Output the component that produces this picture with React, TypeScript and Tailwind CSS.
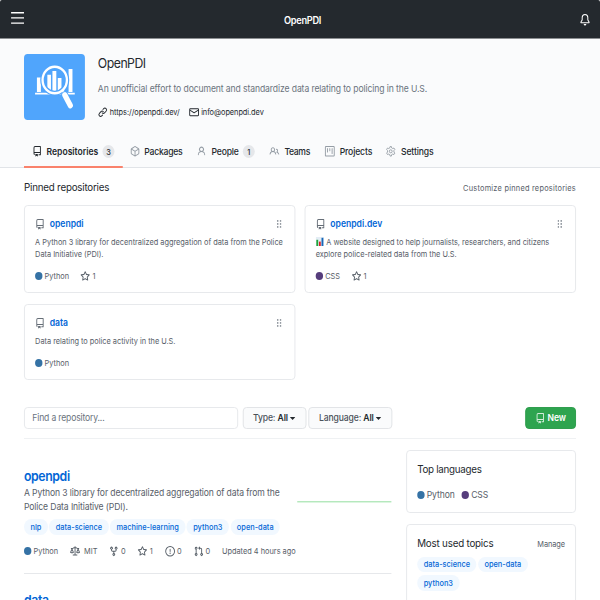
import React from "react";

const icons = {
  repo: "M2 2.5A2.5 2.5 0 014.5 0h8.75a.75.75 0 01.75.75v12.5a.75.75 0 01-.75.75h-2.5a.75.75 0 110-1.5h1.75v-2h-8a1 1 0 00-.714 1.7.75.75 0 01-1.072 1.05A2.495 2.495 0 012 11.5v-9zm10.5-1V9h-8c-.356 0-.694.074-1 .208V2.5a1 1 0 011-1h8zM5 12.25v3.25a.25.25 0 00.4.2l1.45-1.087a.25.25 0 01.3 0L8.6 15.7a.25.25 0 00.4-.2v-3.25a.25.25 0 00-.25-.25h-3.5a.25.25 0 00-.25.25z",
  package:
    "M8.878.392a1.75 1.75 0 00-1.756 0l-5.25 3.045A1.75 1.75 0 001 4.951v6.098c0 .624.332 1.2.872 1.514l5.25 3.045a1.75 1.75 0 001.756 0l5.25-3.045c.54-.313.872-.89.872-1.514V4.951c0-.624-.332-1.2-.872-1.514L8.878.392zM7.875 1.69a.25.25 0 01.25 0l4.63 2.685L8 7.133 3.245 4.375l4.63-2.685zM2.5 5.677v5.372c0 .09.047.171.125.216l4.625 2.683V8.432L2.5 5.677zm6.25 8.271l4.625-2.683a.25.25 0 00.125-.216V5.677L8.75 8.432v5.516z",
  person:
    "M10.5 5a2.5 2.5 0 11-5 0 2.5 2.5 0 015 0zm.061 3.073a4 4 0 10-5.123 0 6.004 6.004 0 00-3.431 5.142.75.75 0 001.498.07 4.5 4.5 0 018.99 0 .75.75 0 101.498-.07 6.005 6.005 0 00-3.432-5.142z",
  people:
    "M5.5 3.5a2 2 0 100 4 2 2 0 000-4zM2 5.5a3.5 3.5 0 115.898 2.549 5.507 5.507 0 013.034 4.084.75.75 0 11-1.482.235 4.001 4.001 0 00-7.9 0 .75.75 0 01-1.482-.236A5.507 5.507 0 013.102 8.05 3.49 3.49 0 012 5.5zM11 4a.75.75 0 100 1.5 1.5 1.5 0 01.666 2.844.75.75 0 00-.416.672v.352a.75.75 0 00.574.73c1.2.289 2.162 1.2 2.522 2.372a.75.75 0 101.434-.44 5.01 5.01 0 00-2.56-3.012A3 3 0 0011 4z",
  project:
    "M1.75 0A1.75 1.75 0 000 1.75v12.5C0 15.216.784 16 1.75 16h12.5A1.75 1.75 0 0016 14.25V1.75A1.75 1.75 0 0014.25 0H1.75zM1.5 1.75a.25.25 0 01.25-.25h12.5a.25.25 0 01.25.25v12.5a.25.25 0 01-.25.25H1.75a.25.25 0 01-.25-.25V1.75zM11.75 3a.75.75 0 00-.75.75v7.5a.75.75 0 001.5 0v-7.5a.75.75 0 00-.75-.75zm-8.25.75a.75.75 0 011.5 0v5.5a.75.75 0 01-1.5 0v-5.5zM8 3a.75.75 0 00-.75.75v3.5a.75.75 0 001.5 0v-3.5A.75.75 0 008 3z",
  star: "M8 .25a.75.75 0 01.673.418l1.882 3.815 4.21.612a.75.75 0 01.416 1.279l-3.046 2.97.719 4.192a.75.75 0 01-1.088.791L8 12.347l-3.766 1.98a.75.75 0 01-1.088-.79l.72-4.194L.818 6.374a.75.75 0 01.416-1.28l4.21-.611L7.327.668A.75.75 0 018 .25zm0 2.445L6.615 5.5a.75.75 0 01-.564.41l-3.097.45 2.24 2.184a.75.75 0 01.216.664l-.528 3.084 2.769-1.456a.75.75 0 01.698 0l2.77 1.456-.53-3.084a.75.75 0 01.216-.664l2.24-2.183-3.096-.45a.75.75 0 01-.564-.41L8 2.694v.001z",
  law: "M8.75.75a.75.75 0 00-1.5 0V2h-.984c-.305 0-.604.08-.869.23l-1.288.737A.25.25 0 013.984 3H1.75a.75.75 0 000 1.5h.428L.066 9.192a.75.75 0 00.154.838l.53-.53-.53.53v.001l.002.002.002.002.006.006.016.015.045.04a3.514 3.514 0 00.686.45A4.492 4.492 0 003 11c.88 0 1.556-.22 2.023-.454a3.515 3.515 0 00.686-.45l.045-.04.016-.015.006-.006.002-.002.001-.002L5.25 9.5l.53.53a.75.75 0 00.154-.838L3.822 4.5h.162c.305 0 .604-.08.869-.23l1.289-.737a.25.25 0 01.124-.033h.984V13h-2.5a.75.75 0 000 1.5h6.5a.75.75 0 000-1.5h-2.5V3.5h.984a.25.25 0 01.124.033l1.29.736c.264.152.563.231.868.231h.162l-2.112 4.692a.75.75 0 00.154.838l.53-.53-.53.53v.001l.002.002.002.002.006.006.016.015.045.04a3.517 3.517 0 00.686.45A4.492 4.492 0 0013 11c.88 0 1.556-.22 2.023-.454a3.512 3.512 0 00.686-.45l.045-.04.01-.01.006-.005.006-.006.002-.002.001-.002-.529-.531.53.53a.75.75 0 00.154-.838L13.823 4.5h.427a.75.75 0 000-1.5h-2.234a.25.25 0 01-.124-.033l-1.29-.736A1.75 1.75 0 009.735 2H8.75V.75zM1.695 9.227c.285.135.718.273 1.305.273s1.02-.138 1.305-.273L3 6.327l-1.305 2.9zm10 0c.285.135.718.273 1.305.273s1.02-.138 1.305-.273L13 6.327l-1.305 2.9z",
  fork: "M5 3.25a.75.75 0 11-1.5 0 .75.75 0 011.5 0zm0 2.122a2.25 2.25 0 10-1.5 0v.878A2.25 2.25 0 005.75 8.5h1.5v2.128a2.251 2.251 0 101.5 0V8.5h1.5a2.25 2.25 0 002.25-2.25v-.878a2.25 2.25 0 10-1.5 0v.878a.75.75 0 01-.75.75h-4.5A.75.75 0 015 6.25v-.878zm3.75 7.378a.75.75 0 11-1.5 0 .75.75 0 011.5 0zm3-8.75a.75.75 0 100-1.5.75.75 0 000 1.5z",
  issue:
    "M8 1.5a6.5 6.5 0 100 13 6.5 6.5 0 000-13zM0 8a8 8 0 1116 0A8 8 0 010 8zm9 3a1 1 0 11-2 0 1 1 0 012 0zm-.25-6.25a.75.75 0 00-1.5 0v3.5a.75.75 0 001.5 0v-3.5z",
  pull: "M7.177 3.073L9.573.677A.25.25 0 0110 .854v4.792a.25.25 0 01-.427.177L7.177 3.427a.25.25 0 010-.354zM3.75 2.5a.75.75 0 100 1.5.75.75 0 000-1.5zm-2.25.75a2.25 2.25 0 113 2.122v5.256a2.251 2.251 0 11-1.5 0V5.372A2.25 2.25 0 011.5 3.25zM11 2.5h-1V4h1a1 1 0 011 1v5.628a2.251 2.251 0 101.5 0V5A2.5 2.5 0 0011 2.5zm1 10.25a.75.75 0 111.5 0 .75.75 0 01-1.5 0zM3.75 12a.75.75 0 100 1.5.75.75 0 000-1.5z",
  link: "M7.775 3.275a.75.75 0 001.06 1.06l1.25-1.25a2 2 0 112.83 2.83l-2.5 2.5a2 2 0 01-2.83 0 .75.75 0 00-1.06 1.06 3.5 3.5 0 004.95 0l2.5-2.5a3.5 3.5 0 00-4.95-4.95l-1.25 1.25zm-4.69 9.64a2 2 0 010-2.83l2.5-2.5a2 2 0 012.83 0 .75.75 0 001.06-1.06 3.5 3.5 0 00-4.95 0l-2.5 2.5a3.5 3.5 0 004.95 4.95l1.25-1.25a.75.75 0 00-1.06-1.06l-1.25 1.25a2 2 0 01-2.83 0z",
  mail: "M1.75 2A1.75 1.75 0 000 3.75v.736a.75.75 0 000 .027v7.737C0 13.216.784 14 1.75 14h12.5A1.75 1.75 0 0016 12.25v-8.5A1.75 1.75 0 0014.25 2H1.75zM14.5 4.07v-.32a.25.25 0 00-.25-.25H1.75a.25.25 0 00-.25.25v.32L8 7.88l6.5-3.81zm-13 1.74v6.441c0 .138.112.25.25.25h12.5a.25.25 0 00.25-.25V5.809L8.38 9.397a.75.75 0 01-.76 0L1.5 5.809z",
  bell: "M8 16a2 2 0 001.985-1.75c.017-.137-.097-.25-.235-.25h-3.5c-.138 0-.252.113-.235.25A2 2 0 008 16z M8 1.5A3.5 3.5 0 004.5 5v2.947c0 .346-.102.683-.294.97l-1.703 2.556a.018.018 0 00-.003.01l.001.006c0 .002.002.004.004.006a.017.017 0 00.006.004l.007.001h10.964l.007-.001a.016.016 0 00.006-.004.016.016 0 00.004-.006l.001-.007a.017.017 0 00-.003-.01l-1.703-2.554a1.75 1.75 0 01-.294-.97V5A3.5 3.5 0 008 1.5zM3 5a5 5 0 0110 0v2.947c0 .05.015.098.042.139l1.703 2.555A1.518 1.518 0 0113.482 13H2.518a1.518 1.518 0 01-1.263-2.36l1.703-2.554A.25.25 0 003 7.947V5z",
};

type IconName = keyof typeof icons | "gear";

function Icon({ name, className = "size-[10.6px]" }: { name: IconName; className?: string }) {
  return (
    <svg viewBox="0 0 16 16" fill="currentColor" className={`shrink-0 overflow-visible ${className}`}>
      {name === "gear" ? (
        <g fill="none" stroke="currentColor" strokeWidth="1.4">
          <path d="M7 .8h2l.6 2.200 1.600.800 2.100-.700 1.400 2.200-1.500 1.600v2.200l1.500 1.600-1.400 2.200-2.100-.700-1.600.800-.6 2.200H7l-.6-2.200-1.600-.800-2.100.700-1.400-2.200 1.500-1.600V6.900L1.300 5.300l1.400-2.200 2.100.700 1.600-.800z" strokeLinejoin="round" />
          <circle cx="8" cy="8" r="2.300" />
        </g>
      ) : (
        <path fillRule="evenodd" d={icons[name]} />
      )}
    </svg>
  );
}

function Avatar() {
  return (
    <svg viewBox="0 0 66 66" className="size-[66px] shrink-0">
      <rect width="66" height="66" rx="4" fill="#50a5fc" />
      <path
        d="M12 38.700h43v1.800H12zM14 23.500h4.300V38H14zM25.300 20.700h3.900v16h-3.900zM30.800 17h4.200v21h-4.200zM36.600 24h4v13h-4zM48.300 15h4.200v23h-4.200z"
        fill="#fff"
      />
      <circle cx="33.300" cy="26" r="13.200" fill="none" stroke="#50a5fc" strokeWidth="5" />
      <circle cx="33.300" cy="26" r="13.200" fill="none" stroke="#fff" strokeWidth="2.500" />
      <path d="M41.500 36.500l2.500 3" stroke="#fff" strokeWidth="2.800" />
      <path d="M44.200 41l5.800 10.500" stroke="#50a5fc" strokeWidth="7.600" strokeLinecap="round" />
      <path d="M44.200 41l6 10.500" stroke="#fff" strokeWidth="5.600" strokeLinecap="round" />
    </svg>
  );
}

function Dot({ color }: { color: string }) {
  return <span className={`size-[8px] shrink-0 rounded-full ${color}`} />;
}

function Tab({
  icon,
  label,
  count,
  active,
  width,
  text,
}: {
  icon: IconName;
  label: string;
  count?: string;
  active?: boolean;
  width: string;
  text: string;
}) {
  return (
    <div
      className={`flex h-[32px] items-center border-b-2 pt-px text-[9.3px] text-[#24292e] ${width} ${
        active ? "border-[#f9826c] pl-[9px] font-semibold" : "border-transparent pl-[8px] font-medium"
      }`}
    >
      <Icon name={icon} className={active ? "size-[10.6px] text-[#24292e]" : "size-[10.6px] text-[#959da5]"} />
      <span className={`whitespace-nowrap ${active ? "ml-[4.8px]" : "ml-[5.3px]"} ${text}`}>{label}</span>
      {count && (
        <span className="ml-[4.5px] flex h-[13px] w-[13px] items-center justify-center rounded-full bg-[#e5e7ea] text-[8px] font-medium">
          {count}
        </span>
      )}
    </div>
  );
}

function Grip() {
  return (
    <svg viewBox="0 0 5 8" className="mr-[3px] h-[8px] w-[5px] text-[#6a737d]" fill="currentColor">
      {[0.3, 3.3, 6.3].map((y) => (
        <React.Fragment key={y}>
          <rect x="0" y={y} width="1.6" height="1.3" />
          <rect x="3.2" y={y} width="1.6" height="1.3" />
        </React.Fragment>
      ))}
    </svg>
  );
}

function PinCard({
  name,
  children,
  lang,
  color,
  stars,
  height,
}: {
  name: string;
  children: React.ReactNode;
  lang: string;
  color: string;
  stars?: string;
  height: string;
}) {
  return (
    <div className={`flex flex-col rounded-[4px] border border-[#e6e8eb] px-[11px] pt-[11px] pb-[10px] ${height}`}>
      <div className="flex h-[14px] items-center">
        <Icon name="repo" className="size-[10.6px] text-[#666e77]" />
        <span className="ml-[5.3px] text-[9.3px] font-semibold text-[#0366d6]">{name}</span>
        <span className="grow" />
        <Grip />
      </div>
      <p className="mt-[4.5px] text-[8px] leading-[12px] tracking-[-0.02px] whitespace-nowrap text-[#586069]">{children}</p>
      <span className="grow" />
      <div className="flex h-[12px] items-center text-[8px] text-[#586069]">
        <Dot color={color} />
        <span className="ml-[2.3px]">{lang}</span>
        {stars && (
          <>
            <Icon name="star" className="ml-[12.2px] size-[10.6px]" />
            <span className="ml-[2.6px]">{stars}</span>
          </>
        )}
      </div>
    </div>
  );
}

function Topic({ children }: { children: React.ReactNode }) {
  return (
    <span className="flex h-[15.5px] items-center rounded-full bg-[#f1f8ff] px-[7px] text-[8px] font-medium whitespace-nowrap text-[#0366d6]">
      {children}
    </span>
  );
}

function FilterButton({ label, width, gap }: { label: string; width: string; gap: string }) {
  return (
    <div
      className={`flex h-[22px] items-center justify-center rounded-[4px] border border-[#e1e3e6] bg-[#fafbfc] text-[9.3px] font-medium tracking-[-0.14px] text-[#4b525a] ${width} ${gap}`}
    >
      {label}:&nbsp;<span className="font-semibold text-[#24292e]">All</span>
      <svg viewBox="0 0 6 3" className="ml-[2.5px] h-[3px] w-[6px]" fill="#24292e">
        <path d="M0 0h6L3 3z" />
      </svg>
    </div>
  );
}

export default function App() {
  return (
    <div className="h-[600px] w-[600px] overflow-hidden bg-white">
      <div className="flex h-[600px] w-[650px] origin-top-left scale-x-[0.92308] flex-col overflow-hidden bg-white font-['Inter',sans-serif] text-[#24292e]">
        <header className="flex h-[39px] shrink-0 items-center justify-between rounded-t-[2px] border-b border-[#8b8e91] bg-[#24292e] pr-[10.5px] pl-[11.5px] text-white">
          <svg viewBox="0 0 14 12" className="-mt-[1.5px] h-[12px] w-[14px]" fill="#fff">
            <path d="M0 0h14v1.4H0zM0 5.2h14v1.4H0zM0 10.400h14v1.400H0z" />
          </svg>
          <span className="pt-[2px] pl-[2px] text-[10px] font-semibold tracking-[-0.33px]">OpenPDI</span>
          <Icon name="bell" className="mt-[1.5px] size-[11.5px]" />
        </header>

        <section className="flex h-[129px] shrink-0 flex-col border-b border-[#e1e4e8] bg-[#fafbfc] px-[26px]">
          <div className="flex pt-[15.3px]">
            <Avatar />
            <div className="ml-[14px] flex flex-col">
              <h1 className="text-[13.3px] leading-[19px] tracking-[-0.55px]">OpenPDI</h1>
              <p className="mt-[9px] text-[9.3px] leading-[13px] tracking-[-0.1px] whitespace-nowrap text-[#6a737d]">
                An unofficial effort to document and standardize data relating to policing in the U.S.
              </p>
              <div className="mt-[10.2px] flex h-[13px] items-center text-[8px]">
                <Icon name="link" />
                <span className="ml-[2.2px] tracking-[-0.03px]">https://openpdi.dev/</span>
                <Icon name="mail" className="ml-[10.5px] size-[10.6px]" />
                <span className="ml-[2.2px] tracking-[-0.07px]">info@openpdi.dev</span>
              </div>
            </div>
          </div>
          <nav className="mt-auto -mb-px flex">
            <Tab icon="repo" label="Repositories" count="3" active width="w-[106.5px]" text="" />
            <Tab icon="package" label="Packages" width="w-[72.8px]" text="tracking-[-0.25px]" />
            <Tab icon="person" label="People" count="1" width="w-[78.9px]" text="tracking-[-0.2px]" />
            <Tab icon="people" label="Teams" width="w-[59.9px]" text="tracking-[-0.35px]" />
            <Tab icon="project" label="Projects" width="w-[66.4px]" text="tracking-[-0.13px]" />
            <Tab icon="gear" label="Settings" width="w-[70px]" text="tracking-[-0.12px]" />
          </nav>
        </section>

        <main className="flex flex-col px-[26px]">
          <div className="mt-[11.5px] flex h-[16px] items-center justify-between">
            <h2 className="text-[10.6px] tracking-[-0.23px]">Pinned repositories</h2>
            <span className="pt-px text-[8px] tracking-[0.25px] text-[#586069]">Customize pinned repositories</span>
          </div>
          <div className="mt-[9.5px] grid grid-cols-[294px_294px] items-start gap-x-[10px] gap-y-[11px]">
            <PinCard name="openpdi" lang="Python" color="bg-[#3572A5]" stars="1" height="h-[88px]">
              A Python 3 library for decentralized aggregation of data from the Police
              <br />
              Data Initiative (PDI).
            </PinCard>
            <PinCard name="openpdi.dev" lang="CSS" color="bg-[#563d7c]" stars="1" height="h-[88px]">
              <svg viewBox="0 0 9 9" className="-mt-px mr-[2.5px] inline size-[9px] align-middle">
                <rect width="9" height="9" fill="#e4edf5" />
                <rect x=".7" y="2.8" width="2" height="6.2" fill="#1fa53a" />
                <rect x="3.5" y="4.6" width="2" height="4.4" fill="#d8232a" />
                <rect x="6.3" y=".8" width="2" height="8.2" fill="#1767b8" />
              </svg>
              A website designed to help journalists, researchers, and citizens
              <br />
              explore police-related data from the U.S.
            </PinCard>
            <PinCard name="data" lang="Python" color="bg-[#3572A5]" height="h-[76px]">
              Data relating to police activity in the U.S.
            </PinCard>
          </div>

          <div className="mt-[27px] flex h-[32px] border-b border-[#eff1f3]">
            <div className="flex h-[22px] w-[232px] items-center rounded-[4px] border border-[#e6e8eb] px-[8px] text-[9.3px] tracking-[-0.17px] text-[#6a737d]">
              Find a repository...
            </div>
            <FilterButton label="Type" width="w-[68.5px]" gap="ml-[5px]" />
            <FilterButton label="Language" width="w-[91px]" gap="ml-[2.5px]" />
            <div className="ml-auto flex h-[22px] w-[55px] items-center justify-center rounded-[4px] border border-[#2d9c4b] bg-[#2ea44f] text-[9.3px] font-semibold tracking-[-0.1px] text-white">
              <Icon name="repo" className="mr-[2.5px] size-[10.6px] opacity-80" />
              New
            </div>
          </div>

          <div className="flex justify-between">
            <div className="w-[398px] pt-[28px]">
              <div className="flex h-[107px] flex-col border-b border-[#e6e8eb]">
                <h3 className="text-[13.3px] leading-[18px] font-semibold tracking-[-0.42px] text-[#0366d6]">openpdi</h3>
                <div className="mt-px flex items-center justify-between">
                  <p className="text-[9.3px] leading-[14px] tracking-[-0.115px] whitespace-nowrap text-[#586069]">
                    A Python 3 library for decentralized aggregation of data from the
                    <br />
                    Police Data Initiative (PDI).
                  </p>
                  <span className="mt-[3px] w-[102px] border-t border-b border-t-[#b5e8bd] border-b-[#dcf5e0]" />
                </div>
                <div className="mt-[5px] flex gap-[1.6px]">
                  <Topic>nlp</Topic>
                  <Topic>data-science</Topic>
                  <Topic>machine-learning</Topic>
                  <Topic>python3</Topic>
                  <Topic>open-data</Topic>
                </div>
                <div className="mt-[10px] flex h-[13px] items-center text-[8px] whitespace-nowrap text-[#586069]">
                  <Dot color="bg-[#3572A5]" />
                  <span className="ml-[2.3px] w-[39.5px]">Python</span>
                  <Icon name="law" />
                  <span className="ml-[4.7px] w-[27px]">MIT</span>
                  <Icon name="fork" />
                  <span className="ml-[2.3px] w-[18.5px]">0</span>
                  <Icon name="star" />
                  <span className="ml-[2.3px] w-[16.4px]">1</span>
                  <Icon name="issue" />
                  <span className="ml-[2.3px] w-[18.2px]">0</span>
                  <Icon name="pull" />
                  <span className="ml-[2.3px] w-[17.7px]">0</span>
                  <span>Updated 4 hours ago</span>
                </div>
              </div>
              <h3 className="mt-[17px] text-[13.3px] leading-[18px] font-semibold tracking-[-0.42px] text-[#0366d6]">data</h3>
            </div>

            <aside className="flex w-[184px] flex-col gap-[11px] pt-[11px]">
              <div className="h-[63px] rounded-[4px] border border-[#e6e8eb] px-[11px] pt-[11px]">
                <h4 className="text-[10.6px] leading-[16px] tracking-[-0.3px]">Top languages</h4>
                <div className="mt-[10px] flex h-[14px] items-center text-[9.3px] tracking-[-0.08px] text-[#586069]">
                  <Dot color="bg-[#3572A5]" />
                  <span className="ml-[2.2px]">Python</span>
                  <Dot color="ml-[7.5px] bg-[#563d7c]" />
                  <span className="ml-[2.3px]">CSS</span>
                </div>
              </div>
              <div className="h-[100px] rounded-[4px] border border-[#e6e8eb] px-[11px] pt-[10.5px]">
                <div className="flex h-[16px] items-center justify-between">
                  <h4 className="text-[10.6px] tracking-[-0.21px]">Most used topics</h4>
                  <span className="pt-px text-[8px] tracking-[-0.1px] text-[#586069]">Manage</span>
                </div>
                <div className="mt-[5px] flex flex-wrap gap-x-[1.6px] gap-y-[3px]">
                  <Topic>data-science</Topic>
                  <Topic>open-data</Topic>
                  <Topic>python3</Topic>
                </div>
              </div>
            </aside>
          </div>
        </main>
      </div>
    </div>
  );
}
